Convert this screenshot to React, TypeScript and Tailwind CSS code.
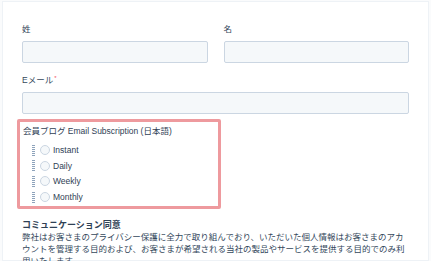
import React from 'react';

const options = ['Instant', 'Daily', 'Weekly', 'Monthly'];

function Field({ label, required }: { label: string; required?: boolean }) {
  return (
    <div className="flex flex-col">
      <label className="h-[12px] text-[8.5px] leading-[12px] text-[#33475b]">
        {label}
        {required && <span className="relative -top-[3px] ml-[1px] text-[6px] text-[#f2545b]">*</span>}
      </label>
      <input
        type="text"
        className="mt-[6px] h-[22px] w-full rounded-[2px] border border-[#cbd6e2] bg-[#f5f8fa] outline-none"
      />
    </div>
  );
}

export default function App() {
  return (
    <div
      className="h-[261px] w-[431px] overflow-hidden bg-[#fafbfc] pl-[2px] pr-[2px] pt-[1px]"
      style={{ fontFamily: '"Liberation Sans", "Noto Sans CJK JP", sans-serif' }}
    >
      <div className="h-full border border-[#eef2f6] bg-white pl-[19px] pr-[19px] pt-[21px]">
        {/* name row */}
        <div className="grid grid-cols-2 gap-[16px]">
          <Field label="姓" />
          <Field label="名" />
        </div>

        <div className="mt-[11px]">
          <Field label="Eメール" required />
        </div>

        {/* selected subscription field */}
        <div className="-ml-[5px] mt-[5px] w-[204px] rounded-[2px] border-[3px] border-[#ee9a9e] pb-[1px] pl-[3px] pt-[3px]">
          <div className="text-[8.5px] leading-[12px] text-[#2f4155]">会員ブログ Email Subscription (日本語)</div>
          <div className="mt-[5.5px] flex flex-col pl-[9px]">
            {options.map((opt) => (
              <div key={opt} className="flex h-[15.6px] items-center">
                <span className="h-[11px] w-[3px] bg-[repeating-linear-gradient(to_bottom,#8ea3bb_0px,#8ea3bb_1px,transparent_1px,transparent_2px)]" />
                <span className="ml-[5px] h-[10px] w-[10px] rounded-full border border-[#cbd6e2] bg-[#f5f8fa]" />
                <span className="ml-[3px] text-[8.5px] leading-[12px] text-[#2f4155]">{opt}</span>
              </div>
            ))}
          </div>
        </div>

        {/* consent */}
        <div className="mt-[10px]">
          <div className="text-[9px] font-bold leading-[12px] text-[#2f4155]">コミュニケーション同意</div>
          <p className="text-[8.5px] leading-[12px] text-[#33475b]">
            弊社はお客さまのプライバシー保護に全力で取り組んでおり、いただいた個人情報はお客さまのアカウントを管理する目的および、お客さまが希望される当社の製品やサービスを提供する目的でのみ利用いたします。
          </p>
        </div>
      </div>
    </div>
  );
}
